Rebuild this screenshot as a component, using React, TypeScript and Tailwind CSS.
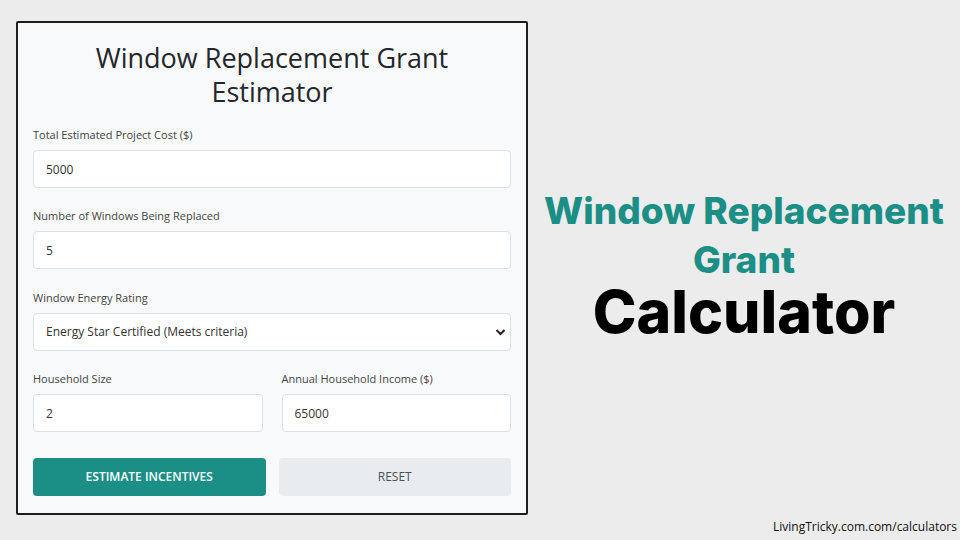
import { useState } from "react";

const inputCls =
  "h-[38px] w-full rounded-[4px] border border-[#dcdfe3] bg-white px-[12px] text-[12px] text-[#333] outline-none";

export default function App() {
  const [cost, setCost] = useState("5000");
  const [windows, setWindows] = useState("5");
  const [rating, setRating] = useState("energy-star");
  const [size, setSize] = useState("2");
  const [income, setIncome] = useState("65000");

  function reset() {
    setCost("5000");
    setWindows("5");
    setRating("energy-star");
    setSize("2");
    setIncome("65000");
  }

  return (
    <div className="flex h-[540px] w-[960px] flex-col bg-[#ececec] font-['Open_Sans',sans-serif]">
      <div className="flex pl-[16px] pt-[21px]">
        {/* estimator card */}
        <section className="h-[494px] w-[512px] rounded-[2px] border-2 border-[#1e1e1e] bg-[#f8f9fa] px-[15px] pt-[18px]">
          <h1 className="mb-[18px] text-center text-[27px] leading-[34px] text-[#23272b]">
            Window Replacement Grant
            <br />
            Estimator
          </h1>

          <Field label="Total Estimated Project Cost ($)">
            <input value={cost} onChange={(e) => setCost(e.target.value)} className={inputCls} />
          </Field>

          <Field label="Number of Windows Being Replaced" gap="mb-[21px]">
            <input value={windows} onChange={(e) => setWindows(e.target.value)} className={inputCls} />
          </Field>

          <Field label="Window Energy Rating">
            <div className="relative">
              <select
                value={rating}
                onChange={(e) => setRating(e.target.value)}
                className={`${inputCls} appearance-none`}
              >
                <option value="energy-star">Energy Star Certified (Meets criteria)</option>
                <option value="most-efficient">Energy Star Most Efficient</option>
                <option value="standard">Standard (Not certified)</option>
              </select>
              <svg
                className="pointer-events-none absolute right-[5px] top-[15px]"
                width="11"
                height="8"
                viewBox="0 0 11 8"
                fill="none"
                stroke="#222"
                strokeWidth="2"
              >
                <path d="M1.5 2l4 4 4-4" />
              </svg>
            </div>
          </Field>

          <div className="grid grid-cols-2 gap-[19px]">
            <Field label="Household Size">
              <input value={size} onChange={(e) => setSize(e.target.value)} className={inputCls} />
            </Field>
            <Field label="Annual Household Income ($)">
              <input value={income} onChange={(e) => setIncome(e.target.value)} className={inputCls} />
            </Field>
          </div>

          <div className="mt-[6px] grid grid-cols-2 gap-[13px]">
            <button className="h-[38px] rounded-[4px] bg-[#1b8f86] text-[12px] font-semibold text-white">
              ESTIMATE INCENTIVES
            </button>
            <button onClick={reset} className="h-[38px] rounded-[4px] bg-[#e9ecef] text-[12px] text-[#495057]">
              RESET
            </button>
          </div>
        </section>

        {/* promo heading */}
        <div className="flex flex-1 flex-col items-center pt-[165px] font-['Inter',sans-serif]">
          <p className="text-center text-[37px] font-extrabold leading-[49px] text-[#1b8f86]">
            Window Replacement
            <br />
            Grant
          </p>
          <p className="text-[59px] font-extrabold leading-[56px] text-black">Calculator</p>
        </div>
      </div>

      <p className="mt-[3px] pr-[3px] text-right text-[12px] text-[#111]">LivingTricky.com.com/calculators</p>
    </div>
  );
}

function Field({
  label,
  gap = "mb-[20px]",
  children,
}: {
  label: string;
  gap?: string;
  children: React.ReactNode;
}) {
  return (
    <label className={`${gap} block`}>
      <span className="mb-[8px] block text-[11px] leading-[15px] text-[#444]">{label}</span>
      {children}
    </label>
  );
}
